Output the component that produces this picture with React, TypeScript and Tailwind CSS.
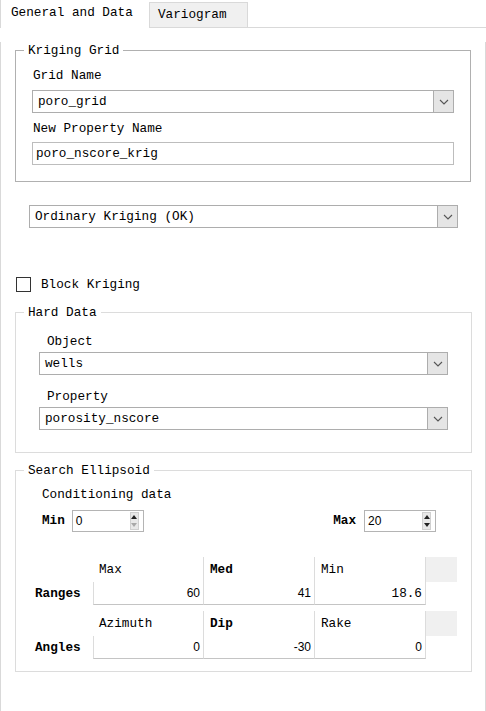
import React from "react";

const mono = "font-['Liberation_Mono',monospace]";

const Chevron = () => (
  <svg width="10" height="6" viewBox="0 0 10 6">
    <path d="M1 1 L5 5 L9 1" fill="none" stroke="#555" strokeWidth="1.1" />
  </svg>
);

const Combo = ({ value, className }: { value: string; className: string }) => (
  <div className={`flex h-[23px] border border-[#adadad] bg-white ${className}`}>
    <div className="flex-1 pl-[5px] leading-[21px] whitespace-nowrap">{value}</div>
    <div className="w-[20px] flex items-center justify-center bg-[#e5e5e5] border-l border-[#adadad]">
      <Chevron />
    </div>
  </div>
);

const Spin = ({ value, muted }: { value: string; muted?: boolean }) => (
  <div className="flex items-center h-[22px] w-[72px] border border-[#b4b4b4] bg-white">
    <div className="flex-1 pl-[3px] font-['Liberation_Sans',sans-serif] text-[12px]">{value}</div>
    <div className="flex flex-col w-[9px] h-[18px] mr-[4px] bg-[#e8e8e8] border border-[#d0d0d0]">
      <div className="flex-1 flex items-center justify-center">
        <svg width="6" height="4" viewBox="0 0 6 4">
          <path d="M0 4 L3 0 L6 4 Z" fill="#222" />
        </svg>
      </div>
      <div className="flex-1 flex items-center justify-center">
        <svg width="6" height="4" viewBox="0 0 6 4">
          <path d="M0 0 L3 4 L6 0 Z" fill={muted ? "#a8a8a8" : "#222"} />
        </svg>
      </div>
    </div>
  </div>
);

type Col = { head: string; bold?: boolean; value: string; sans?: boolean };

const ParamRow = ({ label, cols }: { label: string; cols: Col[] }) => (
  <div className="grid grid-cols-[77px_111px_111px_111px_31px]">
    {/* header line */}
    <div className="h-[25px]" />
    {cols.map((c) => (
      <div
        key={c.head}
        className={`h-[25px] pl-[6px] leading-[25px] border-r border-[#dcdcdc] ${c.bold ? "font-bold" : ""}`}
      >
        {c.head}
      </div>
    ))}
    <div className="h-[25px] bg-[#f0f0f0]" />
    {/* value line */}
    <div className="h-[23px] pl-[19px] leading-[23px] font-bold">{label}</div>
    {cols.map((c, i) => (
      <div
        key={c.head + "v"}
        className={`h-[23px] pr-[3px] text-right leading-[23px] border-r border-b border-b-[#c4c4c4] border-r-[#dcdcdc] ${
          i === 0 ? "border-l border-l-[#dcdcdc]" : ""
        } ${c.sans ? "font-['Liberation_Sans',sans-serif] text-[12px]" : ""}`}
      >
        {c.value}
      </div>
    ))}
    <div />
  </div>
);

export default function App() {
  return (
    <div className={`w-[486px] h-[711px] bg-white text-black text-[12.7px] ${mono}`}>
      {/* tabs */}
      <div className="flex items-end h-[28px]">
        <div className="w-[149px] h-[28px] border-l border-[#d9d9d9] pl-[10px] pt-[4px] leading-[18px] bg-white">
          General and Data
        </div>
        <div className="w-[99px] h-[26px] bg-[#f0f0f0] border border-[#d9d9d9] pl-[8px] leading-[24px]">
          Variogram
        </div>
        <div className="flex-1 h-[28px] border-b border-[#d9d9d9]" />
      </div>

      {/* panel */}
      <div className="h-[680px] border-l border-r border-b border-[#d9d9d9] pl-[14px]">
        <fieldset className="w-[456px] mt-[14px] border border-[#b0b0b0]">
          <legend className="ml-[8px] px-[4px] leading-[17px]">Kriging Grid</legend>
          <div className="px-[16px] pt-[8px] pb-[16px]">
            <div className="pl-[1px] leading-[17px]">Grid Name</div>
            <Combo value="poro_grid" className="mt-[6px]" />
            <div className="pl-[1px] mt-[7px] leading-[17px]">New Property Name</div>
            <div className="mt-[5px] h-[23px] border border-[#bdbdbd] pl-[3px] leading-[21px]">
              poro_nscore_krig
            </div>
          </div>
        </fieldset>

        <Combo value="Ordinary Kriging (OK)" className="mt-[23px] ml-[14px] w-[429px]" />

        <div className="flex items-center mt-[49px] ml-[1px] h-[15px]">
          <div className="w-[15px] h-[15px] border border-[#333] bg-white" />
          <span className="ml-[10px] leading-[17px]">Block Kriging</span>
        </div>

        <fieldset className="w-[457px] mt-[12px] border border-[#dcdcdc]">
          <legend className="ml-[8px] px-[4px] leading-[17px]">Hard Data</legend>
          <div className="px-[23px] pt-[12px] pb-[22px]">
            <div className="pl-[8px] leading-[17px]">Object</div>
            <Combo value="wells" className="mt-[2px]" />
            <div className="pl-[8px] mt-[13px] leading-[17px]">Property</div>
            <Combo value="porosity_nscore" className="mt-[2px]" />
          </div>
        </fieldset>

        <fieldset className="w-[457px] mt-[9px] border border-[#dcdcdc]">
          <legend className="ml-[8px] px-[4px] leading-[17px]">Search Ellipsoid</legend>
          <div className="pt-[7px] pb-[12px]">
            <div className="pl-[26px] leading-[17px]">Conditioning data</div>
            <div className="flex items-center mt-[7px] pl-[26px] pr-[35px]">
              <span className="font-bold mr-[7px]">Min</span>
              <Spin value="0" muted />
              <div className="flex-1" />
              <span className="font-bold mr-[8px]">Max</span>
              <Spin value="20" />
            </div>
            <div className="mt-[25px]">
              <ParamRow
                label="Ranges"
                cols={[
                  { head: "Max", value: "60", sans: true },
                  { head: "Med", bold: true, value: "41", sans: true },
                  { head: "Min", value: "18.6" },
                ]}
              />
            </div>
            <div className="mt-[6px]">
              <ParamRow
                label="Angles"
                cols={[
                  { head: "Azimuth", value: "0", sans: true },
                  { head: "Dip", bold: true, value: "-30", sans: true },
                  { head: "Rake", value: "0", sans: true },
                ]}
              />
            </div>
          </div>
        </fieldset>
      </div>
    </div>
  );
}
